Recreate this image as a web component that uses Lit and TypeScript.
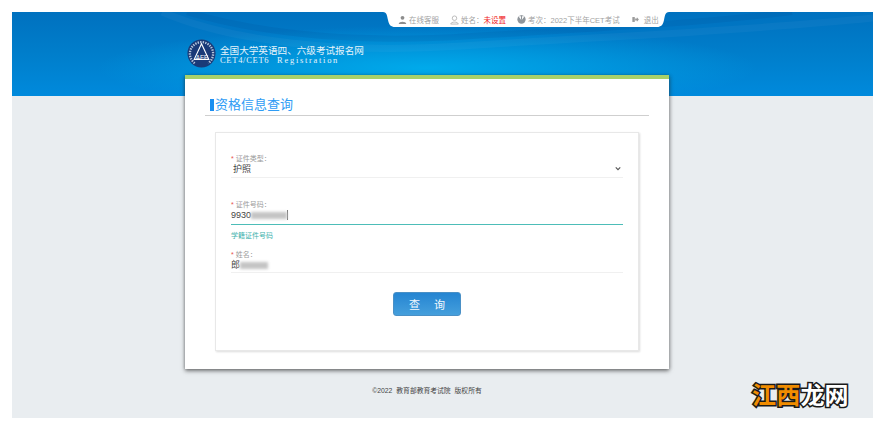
import { css, html, svg, LitElement } from 'lit';
import { customElement } from 'lit/decorators.js';

const logo = svg`<svg class="logo" viewBox="0 0 30 30" width="29" height="29">
  <circle cx="15" cy="15" r="14.5" fill="#1a3a78"/>
  <path d="M8 25 A12 12 0 1 1 22 25" fill="none" stroke="#b7c6dc" stroke-width="2.4" stroke-dasharray="1.4 1.2"/>
  <path d="M15 5 L22.5 21 H7.5 Z" fill="none" stroke="#fff" stroke-width="1.2"/>
  <text x="15.5" y="21.5" text-anchor="middle" font-size="6.5" fill="#fff" font-family="Liberation Sans, sans-serif">AEE</text>
</svg>`;

const waves = svg`<svg class="waves" viewBox="0 0 861 84" width="861" height="84" fill="none">
  <path d="M150 0 C220 30 330 42 450 34 C600 24 720 20 861 6" stroke="rgba(255,255,255,0.035)" stroke-width="7"/>
  <path d="M175 0 C250 22 340 32 460 24 C560 18 680 12 780 0" stroke="rgba(0,60,130,0.1)" stroke-width="6"/>
</svg>`;

const tabShape = svg`<svg class="tab-bg" viewBox="0 0 286 15" width="286" height="15">
  <path d="M0 0 H286 C282 0 282 4 281 8 C280 13 278 15 274 15 H12 C8 15 6 13 5 8 C4 4 4 0 0 0 Z" fill="#fff"/>
</svg>`;

const userIcon = svg`<svg viewBox="0 0 10 10" width="9" height="10"><circle cx="5" cy="2.6" r="2.1" fill="#8d8d8d"/><path d="M0.8 9.5 C1 6 9 6 9.2 9.5 Z" fill="#8d8d8d"/></svg>`;
const nameIcon = svg`<svg viewBox="0 0 10 10" width="9" height="10"><circle cx="5" cy="3" r="2.5" fill="none" stroke="#b5b5b5"/><path d="M0.7 9.5 C1.5 6.6 8.5 6.6 9.3 9.5 Z" fill="none" stroke="#b5b5b5"/></svg>`;
const examIcon = svg`<svg viewBox="0 0 10 10" width="9" height="9"><circle cx="5" cy="5" r="4.6" fill="#8f959b"/><path d="M1.6 1.5 L4.2 5 H5.8 L8.4 1.5 Z" fill="#fff"/><rect x="4.4" y="0.6" width="1.2" height="4.6" fill="#8f959b"/></svg>`;
const exitIcon = svg`<svg viewBox="0 0 10 10" width="7" height="7"><rect x="0.5" y="1.5" width="3.5" height="7" fill="#9a9a9a"/><path d="M4.5 3.5 H7 V1.8 L9.8 5 L7 8.2 V6.5 H4.5 Z" fill="#9a9a9a"/></svg>`;

@customElement('app-root')
export class AppRoot extends LitElement {
  static styles = css`
    :host {
      display: block;
      position: relative;
      height: 427px;
      box-sizing: border-box;
      padding: 12px 12px 9px;
      background: #fff;
      font-family: "Liberation Sans", "Noto Sans CJK SC", sans-serif;
      overflow: hidden;
    }
    .page {
      height: 406px;
      background: #e9edf0;
    }
    .banner {
      position: relative;
      height: 84px;
      background:
        radial-gradient(ellipse 330px 42px at 415px 56px, rgba(0, 172, 236, 0.95), rgba(0, 172, 236, 0) 100%),
        linear-gradient(180deg, #0071bf 0%, #007ecb 50%, #008adc 100%);
      overflow: hidden;
    }
    .waves {
      position: absolute;
      left: 0;
      top: 0;
      display: block;
    }
    .tab {
      position: absolute;
      top: 0;
      left: 371px;
      width: 286px;
      height: 15px;
      box-sizing: border-box;
      padding-left: 15px;
      display: flex;
      align-items: center;
      gap: 11px;
      font-size: 7.5px;
      color: #a3a3a3;
      white-space: nowrap;
    }
    .tab-bg {
      position: absolute;
      left: 0;
      top: 0;
      display: block;
    }
    .tab-item {
      display: flex;
      align-items: center;
      gap: 2px;
      position: relative;
    }
    .tab-item svg {
      display: block;
    }
    .tab-item.exit {
      gap: 5px;
      margin-left: 1px;
    }
    .unset {
      color: #f01818;
    }
    .brand {
      position: absolute;
      left: 175px;
      top: 27px;
      display: flex;
      align-items: flex-start;
      gap: 4px;
      color: #e6f4fb;
    }
    .logo {
      display: block;
    }
    .brand-text {
      margin-top: 7px;
    }
    .brand-cn {
      font-size: 9.6px;
      line-height: 10px;
      white-space: nowrap;
    }
    .brand-en {
      font-family: "Liberation Serif", serif;
      font-size: 8.5px;
      line-height: 9px;
      letter-spacing: 0.7px;
      white-space: nowrap;
    }
    .brand-en span {
      margin-left: 5px;
      letter-spacing: 1.7px;
    }
    .card {
      position: relative;
      box-sizing: border-box;
      width: 484px;
      height: 294px;
      margin: -21px 0 0 173px;
      padding: 18px 20px 0;
      background: #fff;
      border-top: 4px solid #a8d06a;
      box-shadow: 0 2px 4px rgba(40, 40, 40, 0.6), 2px 0 3px rgba(40, 40, 40, 0.12), -1px 0 2px rgba(40, 40, 40, 0.12);
    }
    .title {
      height: 19px;
      box-sizing: border-box;
      border-bottom: 1px solid #cfcfcf;
      font-size: 13px;
      line-height: 16px;
      color: #2f9cf5;
      display: flex;
      align-items: flex-start;
    }
    .title::before {
      content: '';
      width: 4px;
      height: 12px;
      margin: 2px 1px 0 5px;
      background: #1c8ef0;
    }
    .panel {
      box-sizing: border-box;
      width: 424px;
      height: 219px;
      margin: 16px 0 0 10px;
      padding: 21px 15px 0;
      border: 1px solid #e8e8e8;
      box-shadow: 1px 1px 2px rgba(0, 0, 0, 0.14);
    }
    .field {
      position: relative;
      border-bottom: 1px solid #f0f0f0;
    }
    .field.active {
      border-bottom: 1px solid #4dbdb8;
    }
    .label {
      font-size: 7px;
      line-height: 9px;
      color: #9b9b9b;
      white-space: nowrap;
    }
    .star {
      color: #e8534c;
      margin-right: 2px;
    }
    .value {
      font-size: 9px;
      line-height: 12px;
      color: #444;
      white-space: nowrap;
      display: flex;
      align-items: center;
    }
    .smudge {
      display: inline-block;
      height: 7px;
      background: #c4c4c4;
      filter: blur(1.6px);
    }
    .type {
      height: 23px;
    }
    .type .value {
      margin-left: 2px;
    }
    .chevron {
      position: absolute;
      right: 2px;
      top: 12px;
      display: block;
    }
    .idno {
      height: 24px;
      margin-top: 22px;
    }
    .caret {
      width: 1px;
      height: 10px;
      background: #777;
    }
    .hint {
      margin-top: 6px;
      font-size: 7px;
      line-height: 10px;
      color: #3fb2ad;
    }
    .name {
      height: 22px;
      margin-top: 9px;
    }
    .submit {
      display: block;
      width: 68px;
      height: 24px;
      margin: 19px auto 0;
      padding: 0;
      border: 1px solid #4a90c6;
      border-radius: 3px;
      background: linear-gradient(180deg, #2585d2, #459fdc);
      color: #f2f8fd;
      font: inherit;
      font-size: 11px;
      letter-spacing: 14px;
      text-indent: 14px;
    }
    .footer {
      margin-top: 17px;
      text-align: center;
      font-size: 6.8px;
      line-height: 9px;
      color: #444;
      padding-right: 31px;
      word-spacing: 2px;
    }
    .mark {
      position: absolute;
      left: 752px;
      top: 381px;
      font-size: 24px;
      line-height: 30px;
      font-weight: 700;
      letter-spacing: 0.2px;
      white-space: nowrap;
      paint-order: stroke fill;
      -webkit-text-stroke: 3px #1a1a1a;
      color: #fff;
    }
    .mark .orange {
      color: #f08c00;
    }
  `;

  render() {
    return html`
      <div class="page">
        <div class="banner">
          ${waves}
          <div class="tab">
            ${tabShape}
            <span class="tab-item">${userIcon}在线客服</span>
            <span class="tab-item">${nameIcon}<span>姓名：<span class="unset">未设置</span></span></span>
            <span class="tab-item">${examIcon}考次：2022下半年CET考试</span>
            <span class="tab-item exit">${exitIcon}退出</span>
          </div>
          <div class="brand">
            ${logo}
            <div class="brand-text">
              <div class="brand-cn">全国大学英语四、六级考试报名网</div>
              <div class="brand-en">CET4/CET6 <span>Registration</span></div>
            </div>
          </div>
        </div>
        <div class="card">
          <div class="title">资格信息查询</div>
          <div class="panel">
            <div class="field type">
              <div class="label"><span class="star">*</span>证件类型：</div>
              <div class="value">护照</div>
              <svg class="chevron" viewBox="0 0 8 6" width="6" height="5"><path d="M1 1.5 L4 4.5 L7 1.5" fill="none" stroke="#555" stroke-width="1.5"/></svg>
            </div>
            <div class="field idno active">
              <div class="label"><span class="star">*</span>证件号码：</div>
              <div class="value">9930<span class="smudge" style="width: 36px"></span><span class="caret"></span></div>
            </div>
            <div class="hint">学籍证件号码</div>
            <div class="field name">
              <div class="label"><span class="star">*</span>姓名：</div>
              <div class="value">郎<span class="smudge" style="width: 28px"></span></div>
            </div>
            <button class="submit">查询</button>
          </div>
        </div>
        <div class="footer">©2022 教育部教育考试院 版权所有</div>
      </div>
      <div class="mark"><span class="orange">江西</span>龙网</div>
    `;
  }
}
